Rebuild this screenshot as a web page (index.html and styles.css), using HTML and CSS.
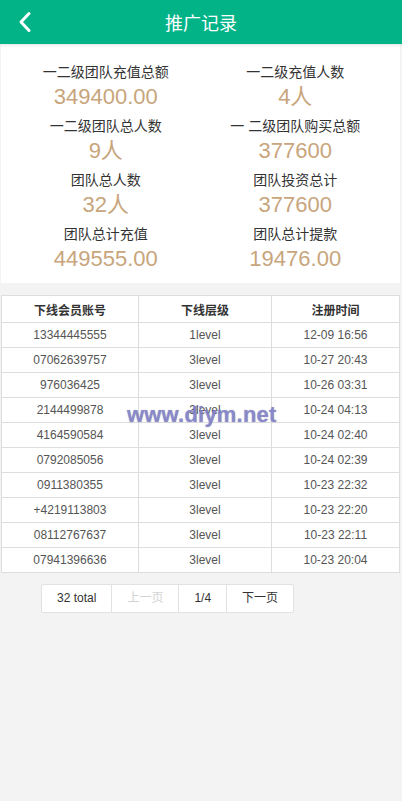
FILE: index.html
```html
<!DOCTYPE html>
<html lang="zh-CN">
<head>
  <meta charset="UTF-8">
  <title>推广记录</title>
  <link rel="stylesheet" href="styles.css">
</head>
<body>

  <div class="header">
    <a class="back" href="#">
      <svg width="14" height="22" viewBox="0 0 14 22">
        <polyline points="11,2.5 3,11 11,19.5" fill="none" stroke="#fff" stroke-width="3" stroke-linecap="round" stroke-linejoin="round"/>
      </svg>
    </a>
    <h1>推广记录</h1>
  </div>

  <div class="page">
    <!-- 统计 -->
    <div class="stats">
      <div class="stat">
        <p class="label">一二级团队充值总额</p>
        <p class="value">349400.00</p>
      </div>
      <div class="stat">
        <p class="label">一二级充值人数</p>
        <p class="value">4人</p>
      </div>
      <div class="stat">
        <p class="label">一二级团队总人数</p>
        <p class="value">9人</p>
      </div>
      <div class="stat">
        <p class="label">一 二级团队购买总额</p>
        <p class="value">377600</p>
      </div>
      <div class="stat">
        <p class="label">团队总人数</p>
        <p class="value">32人</p>
      </div>
      <div class="stat">
        <p class="label">团队投资总计</p>
        <p class="value">377600</p>
      </div>
      <div class="stat">
        <p class="label">团队总计充值</p>
        <p class="value">449555.00</p>
      </div>
      <div class="stat">
        <p class="label">团队总计提款</p>
        <p class="value">19476.00</p>
      </div>
    </div>

    <!-- 下线列表 -->
    <div class="list">
      <table>
        <thead>
          <tr><th class="c1">下线会员账号</th><th class="c2">下线层级</th><th>注册时间</th></tr>
        </thead>
        <tbody>
          <tr><td>13344445555</td><td>1level</td><td>12-09 16:56</td></tr>
          <tr><td>07062639757</td><td>3level</td><td>10-27 20:43</td></tr>
          <tr><td>976036425</td><td>3level</td><td>10-26 03:31</td></tr>
          <tr><td>2144499878</td><td>3level</td><td>10-24 04:13</td></tr>
          <tr><td>4164590584</td><td>3level</td><td>10-24 02:40</td></tr>
          <tr><td>0792085056</td><td>3level</td><td>10-24 02:39</td></tr>
          <tr><td>0911380355</td><td>3level</td><td>10-23 22:32</td></tr>
          <tr><td>+4219113803</td><td>3level</td><td>10-23 22:20</td></tr>
          <tr><td>08112767637</td><td>3level</td><td>10-23 22:11</td></tr>
          <tr><td>07941396636</td><td>3level</td><td>10-23 20:04</td></tr>
        </tbody>
      </table>
      <div class="watermark">www.diym.net</div>
    </div>

    <div class="pager">
      <span>32 total</span>
      <span class="disabled">上一页</span>
      <span>1/4</span>
      <a href="#">下一页</a>
    </div>
  </div>

</body>
</html>
```

FILE: styles.css
```css
body {
  margin: 0;
  padding: 0;
  background: #f3f3f3;
  font-family: "Liberation Sans", "Noto Sans CJK SC", sans-serif;
  color: #333;
  min-height: 801px;
}

p {
  margin: 0;
}

/* 顶部 */
.header {
  height: 44px;
  background: #02b388;
  display: flex;
  align-items: center;
  justify-content: center;
  position: relative;
  box-shadow: 0 1px 3px rgba(0, 0, 0, 0.12);
  z-index: 2;
}

.header h1 {
  margin: 0;
  font-size: 18px;
  font-weight: normal;
  color: #fff;
}

.back {
  position: absolute;
  left: 18px;
  top: 11px;
  display: flex;
}

.page {
  margin: 0 2px 0 1px;
}

/* 统计 */
.stats {
  background: #fff;
  padding: 18px 10px 5px;
  display: grid;
  grid-template-columns: 1fr 1fr;
}

.stat {
  text-align: center;
  margin-bottom: 4px;
}

.stat .label {
  font-size: 14px;
  line-height: 20px;
  color: #333;
}

.stat .value {
  font-size: 22px;
  line-height: 30px;
  color: #c8a57c;
}

/* 列表 */
.list {
  margin-top: 12px;
  position: relative;
}

table {
  width: 100%;
  border-collapse: collapse;
  background: #fff;
  font-size: 12px;
  table-layout: fixed;
}

th, td {
  border: 1px solid #ddd;
  text-align: center;
  padding: 0;
}

th {
  height: 26px;
  font-weight: bold;
  color: #333;
}

td {
  height: 24px;
  color: #555;
}

.c1 { width: 136px; }
.c2 { width: 132px; }

.watermark {
  position: absolute;
  left: 126px;
  top: 107px;
  font-size: 22px;
  font-weight: bold;
  color: rgba(135, 135, 215, 0.8);
  text-shadow: 0 0 1px rgba(90, 90, 110, 0.7);
  letter-spacing: 0.2px;
  pointer-events: none;
}

/* 分页 */
.pager {
  display: inline-flex;
  margin: 11px 0 0 40px;
  background: #fff;
  border: 1px solid #e2e2e2;
  border-radius: 2px;
  font-size: 12px;
}

.pager span, .pager a {
  height: 27px;
  line-height: 27px;
  padding: 0 15px;
  color: #333;
  text-decoration: none;
  border-left: 1px solid #e2e2e2;
}

.pager span:first-child {
  border-left: none;
}

.pager .disabled {
  color: #d2d2d2;
}
```
